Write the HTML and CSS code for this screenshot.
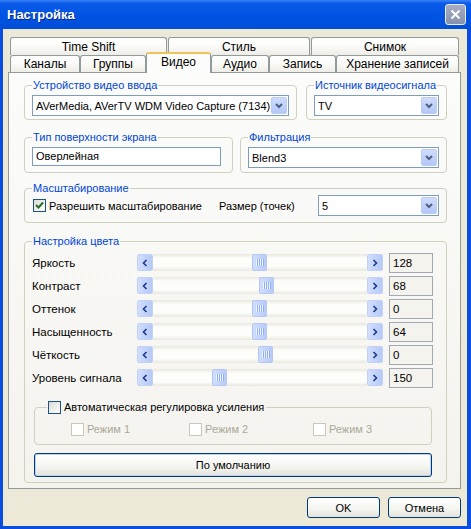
FILE: index.html
```html
<!DOCTYPE html>
<html lang="ru">
<head>
    <meta charset="UTF-8">
    <title>Настройка</title>
    <link rel="stylesheet" href="styles.css">
</head>
<body>

<div class="window">
    <div class="titlebar">
        <span class="title">Настройка</span>
        <span class="close">
            <svg width="11" height="11" viewBox="0 0 11 11"><path d="M1.5 1.5 L9.5 9.5 M9.5 1.5 L1.5 9.5" stroke="#fff" stroke-width="2" fill="none"/></svg>
        </span>
    </div>

    <div class="frame">
        <div class="tabctl">
            <div class="tabrow upper">
                <div class="tab" style="width:157px">Time Shift</div>
                <div class="tab" style="width:142px">Стиль</div>
                <div class="tab" style="width:148px">Снимок</div>
            </div>
            <div class="tabrow lower">
                <div class="tab" style="width:70px">Каналы</div>
                <div class="tab" style="width:66px">Группы</div>
                <div class="tab active" style="width:65px">Видео</div>
                <div class="tab" style="width:58px">Аудио</div>
                <div class="tab" style="width:67px">Запись</div>
                <div class="tab" style="width:123px">Хранение записей</div>
            </div>

            <div class="page">
                <div class="row row1">
                    <fieldset class="group grow">
                        <legend>Устройство видео ввода</legend>
                        <div class="combo">
                            <span class="combo-text">AVerMedia, AVerTV WDM Video Capture (7134)</span>
                            <span class="combo-btn"><svg width="8" height="6" viewBox="0 0 8 6"><path d="M1 1 L4 4 L7 1" stroke="#4d6185" stroke-width="2" fill="none"/></svg></span>
                        </div>
                    </fieldset>
                    <fieldset class="group source">
                        <legend>Источник видеосигнала</legend>
                        <div class="combo">
                            <span class="combo-text">TV</span>
                            <span class="combo-btn"><svg width="8" height="6" viewBox="0 0 8 6"><path d="M1 1 L4 4 L7 1" stroke="#4d6185" stroke-width="2" fill="none"/></svg></span>
                        </div>
                    </fieldset>
                </div>

                <div class="row row2">
                    <fieldset class="group surface">
                        <legend>Тип поверхности экрана</legend>
                        <div class="edit">Оверлейная</div>
                    </fieldset>
                    <fieldset class="group grow">
                        <legend>Фильтрация</legend>
                        <div class="combo">
                            <span class="combo-text">Blend3</span>
                            <span class="combo-btn"><svg width="8" height="6" viewBox="0 0 8 6"><path d="M1 1 L4 4 L7 1" stroke="#4d6185" stroke-width="2" fill="none"/></svg></span>
                        </div>
                    </fieldset>
                </div>

                <fieldset class="group scale">
                    <legend>Масштабирование</legend>
                    <div class="scale-line">
                        <label class="scale-opt">
                            <span class="check">
                                <svg width="11" height="11" viewBox="0 0 11 11"><path d="M2 5 L4.5 7.5 L9 2.5" stroke="#2b6b2b" stroke-width="2" fill="none"/></svg>
                            </span>
                            Разрешить масштабирование
                        </label>
                        <span class="nowrap">Размер (точек)</span>
                        <div class="combo size">
                            <span class="combo-text">5</span>
                            <span class="combo-btn"><svg width="8" height="6" viewBox="0 0 8 6"><path d="M1 1 L4 4 L7 1" stroke="#4d6185" stroke-width="2" fill="none"/></svg></span>
                        </div>
                    </div>
                </fieldset>

                <fieldset class="group color">
                    <legend>Настройка цвета</legend>

                    <div class="crow">
                        <span class="clabel">Яркость</span>
                        <div class="sbar">
                            <span class="sbtn"><svg width="6" height="8" viewBox="0 0 6 8"><path d="M4.5 1 L1.5 4 L4.5 7" stroke="#1d3a8a" stroke-width="1.6" fill="none"/></svg></span>
                            <div class="strack"><span class="thumb" style="margin-left:99px"><span class="grip"></span></span></div>
                            <span class="sbtn"><svg width="6" height="8" viewBox="0 0 6 8"><path d="M1.5 1 L4.5 4 L1.5 7" stroke="#1d3a8a" stroke-width="1.6" fill="none"/></svg></span>
                        </div>
                        <div class="cval">128</div>
                    </div>

                    <div class="crow">
                        <span class="clabel">Контраст</span>
                        <div class="sbar">
                            <span class="sbtn"><svg width="6" height="8" viewBox="0 0 6 8"><path d="M4.5 1 L1.5 4 L4.5 7" stroke="#1d3a8a" stroke-width="1.6" fill="none"/></svg></span>
                            <div class="strack"><span class="thumb" style="margin-left:106px"><span class="grip"></span></span></div>
                            <span class="sbtn"><svg width="6" height="8" viewBox="0 0 6 8"><path d="M1.5 1 L4.5 4 L1.5 7" stroke="#1d3a8a" stroke-width="1.6" fill="none"/></svg></span>
                        </div>
                        <div class="cval">68</div>
                    </div>

                    <div class="crow">
                        <span class="clabel">Оттенок</span>
                        <div class="sbar">
                            <span class="sbtn"><svg width="6" height="8" viewBox="0 0 6 8"><path d="M4.5 1 L1.5 4 L4.5 7" stroke="#1d3a8a" stroke-width="1.6" fill="none"/></svg></span>
                            <div class="strack"><span class="thumb" style="margin-left:99px"><span class="grip"></span></span></div>
                            <span class="sbtn"><svg width="6" height="8" viewBox="0 0 6 8"><path d="M1.5 1 L4.5 4 L1.5 7" stroke="#1d3a8a" stroke-width="1.6" fill="none"/></svg></span>
                        </div>
                        <div class="cval">0</div>
                    </div>

                    <div class="crow">
                        <span class="clabel">Насыщенность</span>
                        <div class="sbar">
                            <span class="sbtn"><svg width="6" height="8" viewBox="0 0 6 8"><path d="M4.5 1 L1.5 4 L4.5 7" stroke="#1d3a8a" stroke-width="1.6" fill="none"/></svg></span>
                            <div class="strack"><span class="thumb" style="margin-left:99px"><span class="grip"></span></span></div>
                            <span class="sbtn"><svg width="6" height="8" viewBox="0 0 6 8"><path d="M1.5 1 L4.5 4 L1.5 7" stroke="#1d3a8a" stroke-width="1.6" fill="none"/></svg></span>
                        </div>
                        <div class="cval">64</div>
                    </div>

                    <div class="crow">
                        <span class="clabel">Чёткость</span>
                        <div class="sbar">
                            <span class="sbtn"><svg width="6" height="8" viewBox="0 0 6 8"><path d="M4.5 1 L1.5 4 L4.5 7" stroke="#1d3a8a" stroke-width="1.6" fill="none"/></svg></span>
                            <div class="strack"><span class="thumb" style="margin-left:105px"><span class="grip"></span></span></div>
                            <span class="sbtn"><svg width="6" height="8" viewBox="0 0 6 8"><path d="M1.5 1 L4.5 4 L1.5 7" stroke="#1d3a8a" stroke-width="1.6" fill="none"/></svg></span>
                        </div>
                        <div class="cval">0</div>
                    </div>

                    <div class="crow">
                        <span class="clabel">Уровень сигнала</span>
                        <div class="sbar">
                            <span class="sbtn"><svg width="6" height="8" viewBox="0 0 6 8"><path d="M4.5 1 L1.5 4 L4.5 7" stroke="#1d3a8a" stroke-width="1.6" fill="none"/></svg></span>
                            <div class="strack"><span class="thumb" style="margin-left:59px"><span class="grip"></span></span></div>
                            <span class="sbtn"><svg width="6" height="8" viewBox="0 0 6 8"><path d="M1.5 1 L4.5 4 L1.5 7" stroke="#1d3a8a" stroke-width="1.6" fill="none"/></svg></span>
                        </div>
                        <div class="cval">150</div>
                    </div>

                    <fieldset class="agc">
                        <legend><span class="check"></span>Автоматическая регулировка усиления</legend>
                        <div class="modes">
                            <span class="mode"><span class="check off"></span>Режим 1</span>
                            <span class="mode m2"><span class="check off"></span>Режим 2</span>
                            <span class="mode"><span class="check off"></span>Режим 3</span>
                        </div>
                    </fieldset>

                    <button class="btn wide">По умолчанию</button>
                </fieldset>
            </div>
        </div>

        <div class="actions">
            <button class="btn">OK</button>
            <button class="btn">Отмена</button>
        </div>
    </div>
</div>

</body>
</html>
```

FILE: styles.css
```css
* {
    box-sizing: border-box;
}

body {
    margin: 0;
    font-family: Tahoma, 'Liberation Sans', Arial, sans-serif;
    font-size: 11px;
    color: #000;
}

.nowrap {
    white-space: nowrap;
}

.window {
    width: 471px;
    height: 529px;
    display: flex;
    flex-direction: column;
    overflow: hidden;
}

.titlebar {
    height: 29px;
    flex: none;
    display: flex;
    align-items: center;
    justify-content: space-between;
    padding: 0 5px 0 7px;
    background: linear-gradient(#3b82f7, #0a5ae8 12%, #0054e3 55%, #004ed8);
}

.title {
    color: #fff;
    font: bold 13px 'Liberation Sans', Arial, sans-serif;
    text-shadow: 1px 1px #0a2a8a;
}

.close {
    width: 21px;
    height: 21px;
    border: 1px solid #e8ecf6;
    border-radius: 3px;
    background: linear-gradient(#a5aec4, #8791ab);
    display: flex;
    align-items: center;
    justify-content: center;
}

.frame {
    flex: 1;
    min-height: 0;
    display: flex;
    flex-direction: column;
    background-color: #ece9d8;
    border: solid #0a4ee0;
    border-width: 0 4px 3px 3px;
    padding: 8px 6px 8px 5px;
}

/* tabs */
.tabctl {
    flex: 1;
    min-height: 0;
    display: flex;
    flex-direction: column;
}

.tabrow {
    display: flex;
    padding-left: 2px;
    flex: none;
    font-size: 12px;
}

.tabrow.upper {
    height: 18px;
}

.tabrow.lower {
    height: 17px;
    align-items: flex-end;
}

.tab {
    height: 100%;
    display: flex;
    align-items: center;
    justify-content: center;
    border: 1px solid #919b9c;
    border-bottom: none;
    border-radius: 3px 3px 0 0;
    background: linear-gradient(#ffffff, #fbfbf9 45%, #eeede6);
    white-space: nowrap;
}

.upper .tab {
    margin-right: 1px;
}

.tab.active {
    height: 21px;
    margin-bottom: -1px;
    position: relative;
    z-index: 1;
    padding-bottom: 3px;
    background: #fcfcfb;
    border-top: 2px solid #f0c25a;
}

.page {
    flex: 1;
    min-height: 0;
    border: 1px solid #919b9c;
    background: linear-gradient(#fcfcfb, #f4f3ee);
    padding: 5px 13px 0 15px;
    display: flex;
    flex-direction: column;
}

/* group boxes */
.row {
    display: flex;
}

.row1 {
    gap: 9px;
}

.row2 {
    gap: 7px;
    margin-top: 10px;
}

.group {
    margin: 0;
    min-width: 0;
    border: 1px solid #d0d0bf;
    border-radius: 4px;
    padding: 3px 7px 3px;
}

.group legend {
    color: #0046d5;
    padding: 0 1px;
    line-height: 14px;
    white-space: nowrap;
}

.grow {
    flex: 1;
}

.source {
    width: 141px;
}

.surface {
    width: 209px;
    padding-bottom: 4px;
}

.row2 .grow {
    padding-bottom: 4px;
}

.combo {
    height: 21px;
    border: 1px solid #7f9db9;
    background: #fff;
    display: flex;
    align-items: center;
    padding: 1px;
}

.combo-text {
    flex: 1;
    padding-left: 2px;
    white-space: nowrap;
    overflow: hidden;
}

.combo-btn {
    width: 16px;
    height: 17px;
    flex: none;
    border: 1px solid #b9cdf8;
    border-radius: 2px;
    background: linear-gradient(#cedcfd, #b4c8f6);
    display: flex;
    align-items: center;
    justify-content: center;
}

.edit {
    width: 189px;
    height: 19px;
    border: 1px solid #7f9db9;
    background: #fff;
    padding-left: 3px;
    line-height: 17px;
}

.scale {
    margin-top: 8px;
    padding: 0 7px 6px;
}

.scale-line {
    display: flex;
    align-items: center;
}

.scale-opt {
    width: 187px;
    display: flex;
    align-items: center;
    padding-left: 1px;
    white-space: nowrap;
}

.combo.size {
    width: 121px;
    margin-left: auto;
}

.check {
    width: 13px;
    height: 13px;
    flex: none;
    border: 1px solid #1c5180;
    background: linear-gradient(135deg, #dcdcd7, #ffffff);
    margin-right: 3px;
    display: inline-flex;
    align-items: center;
    justify-content: center;
}

.check.off {
    border-color: #cac8bb;
    background: #fff;
}

/* color settings */
.color {
    margin-top: 11px;
    padding: 3px 13px 5px 7px;
}

.crow {
    height: 23px;
    display: flex;
    align-items: center;
}

.clabel {
    width: 105px;
    white-space: nowrap;
    font-size: 11.5px;
}

.sbar {
    width: 246px;
    height: 17px;
    display: flex;
}

.sbtn {
    width: 16px;
    height: 17px;
    border: 1px solid #c0d2fa;
    border-radius: 2px;
    background: linear-gradient(90deg, #d2defd, #b6caf6);
    display: flex;
    align-items: center;
    justify-content: center;
}

.strack {
    flex: 1;
    display: flex;
    background: linear-gradient(#e9e8e0, #fdfdfa 25%, #fdfdfa 75%, #e9e8e0);
}

.thumb {
    width: 15px;
    height: 17px;
    border: 1px solid #b3c6f4;
    border-radius: 2px;
    background: linear-gradient(90deg, #d0ddfd, #b8cbf7);
    display: flex;
    align-items: center;
    justify-content: center;
}

.grip {
    width: 8px;
    height: 7px;
    background: repeating-linear-gradient(90deg, #f0f5ff 0 1px, #8eaef2 1px 2px);
}

.cval {
    width: 44px;
    height: 20px;
    margin-left: 6px;
    border: 1px solid #a0a9b4;
    background: #f4f3ee;
    padding-left: 3px;
    line-height: 18px;
    font-size: 11.5px;
}

.agc {
    margin: 11px 1px 0 2px;
    border: 1px solid #d0d0bf;
    border-radius: 4px;
    padding: 8px 0 8px 12px;
    min-width: 0;
}

.group .agc legend {
    color: #000;
    display: flex;
    align-items: center;
    padding: 0 2px 0 1px;
    line-height: 14px;
}

.modes {
    display: flex;
    padding-left: 24px;
    height: 14px;
    align-items: center;
}

.mode {
    width: 120px;
    display: flex;
    align-items: center;
    color: #aca899;
}

.mode.m2 {
    width: 126px;
}

/* buttons */
.btn {
    font-family: Tahoma, 'Liberation Sans', Arial, sans-serif;
    font-size: 11px;
    color: #000;
    width: 73px;
    height: 21px;
    border: 1px solid #003c74;
    border-radius: 3px;
    background: linear-gradient(#ffffff, #f4f4f0 60%, #e3e2da);
    padding: 0;
}

.btn.wide {
    height: 24px;
    display: block;
    width: calc(100% - 3px);
    margin: 8px 1px 0 2px;
    box-shadow: inset 0 0 0 1px #bcd0f6;
}

.actions {
    display: flex;
    justify-content: flex-end;
    gap: 8px;
    margin-top: 8px;
    flex: none;
}
```
